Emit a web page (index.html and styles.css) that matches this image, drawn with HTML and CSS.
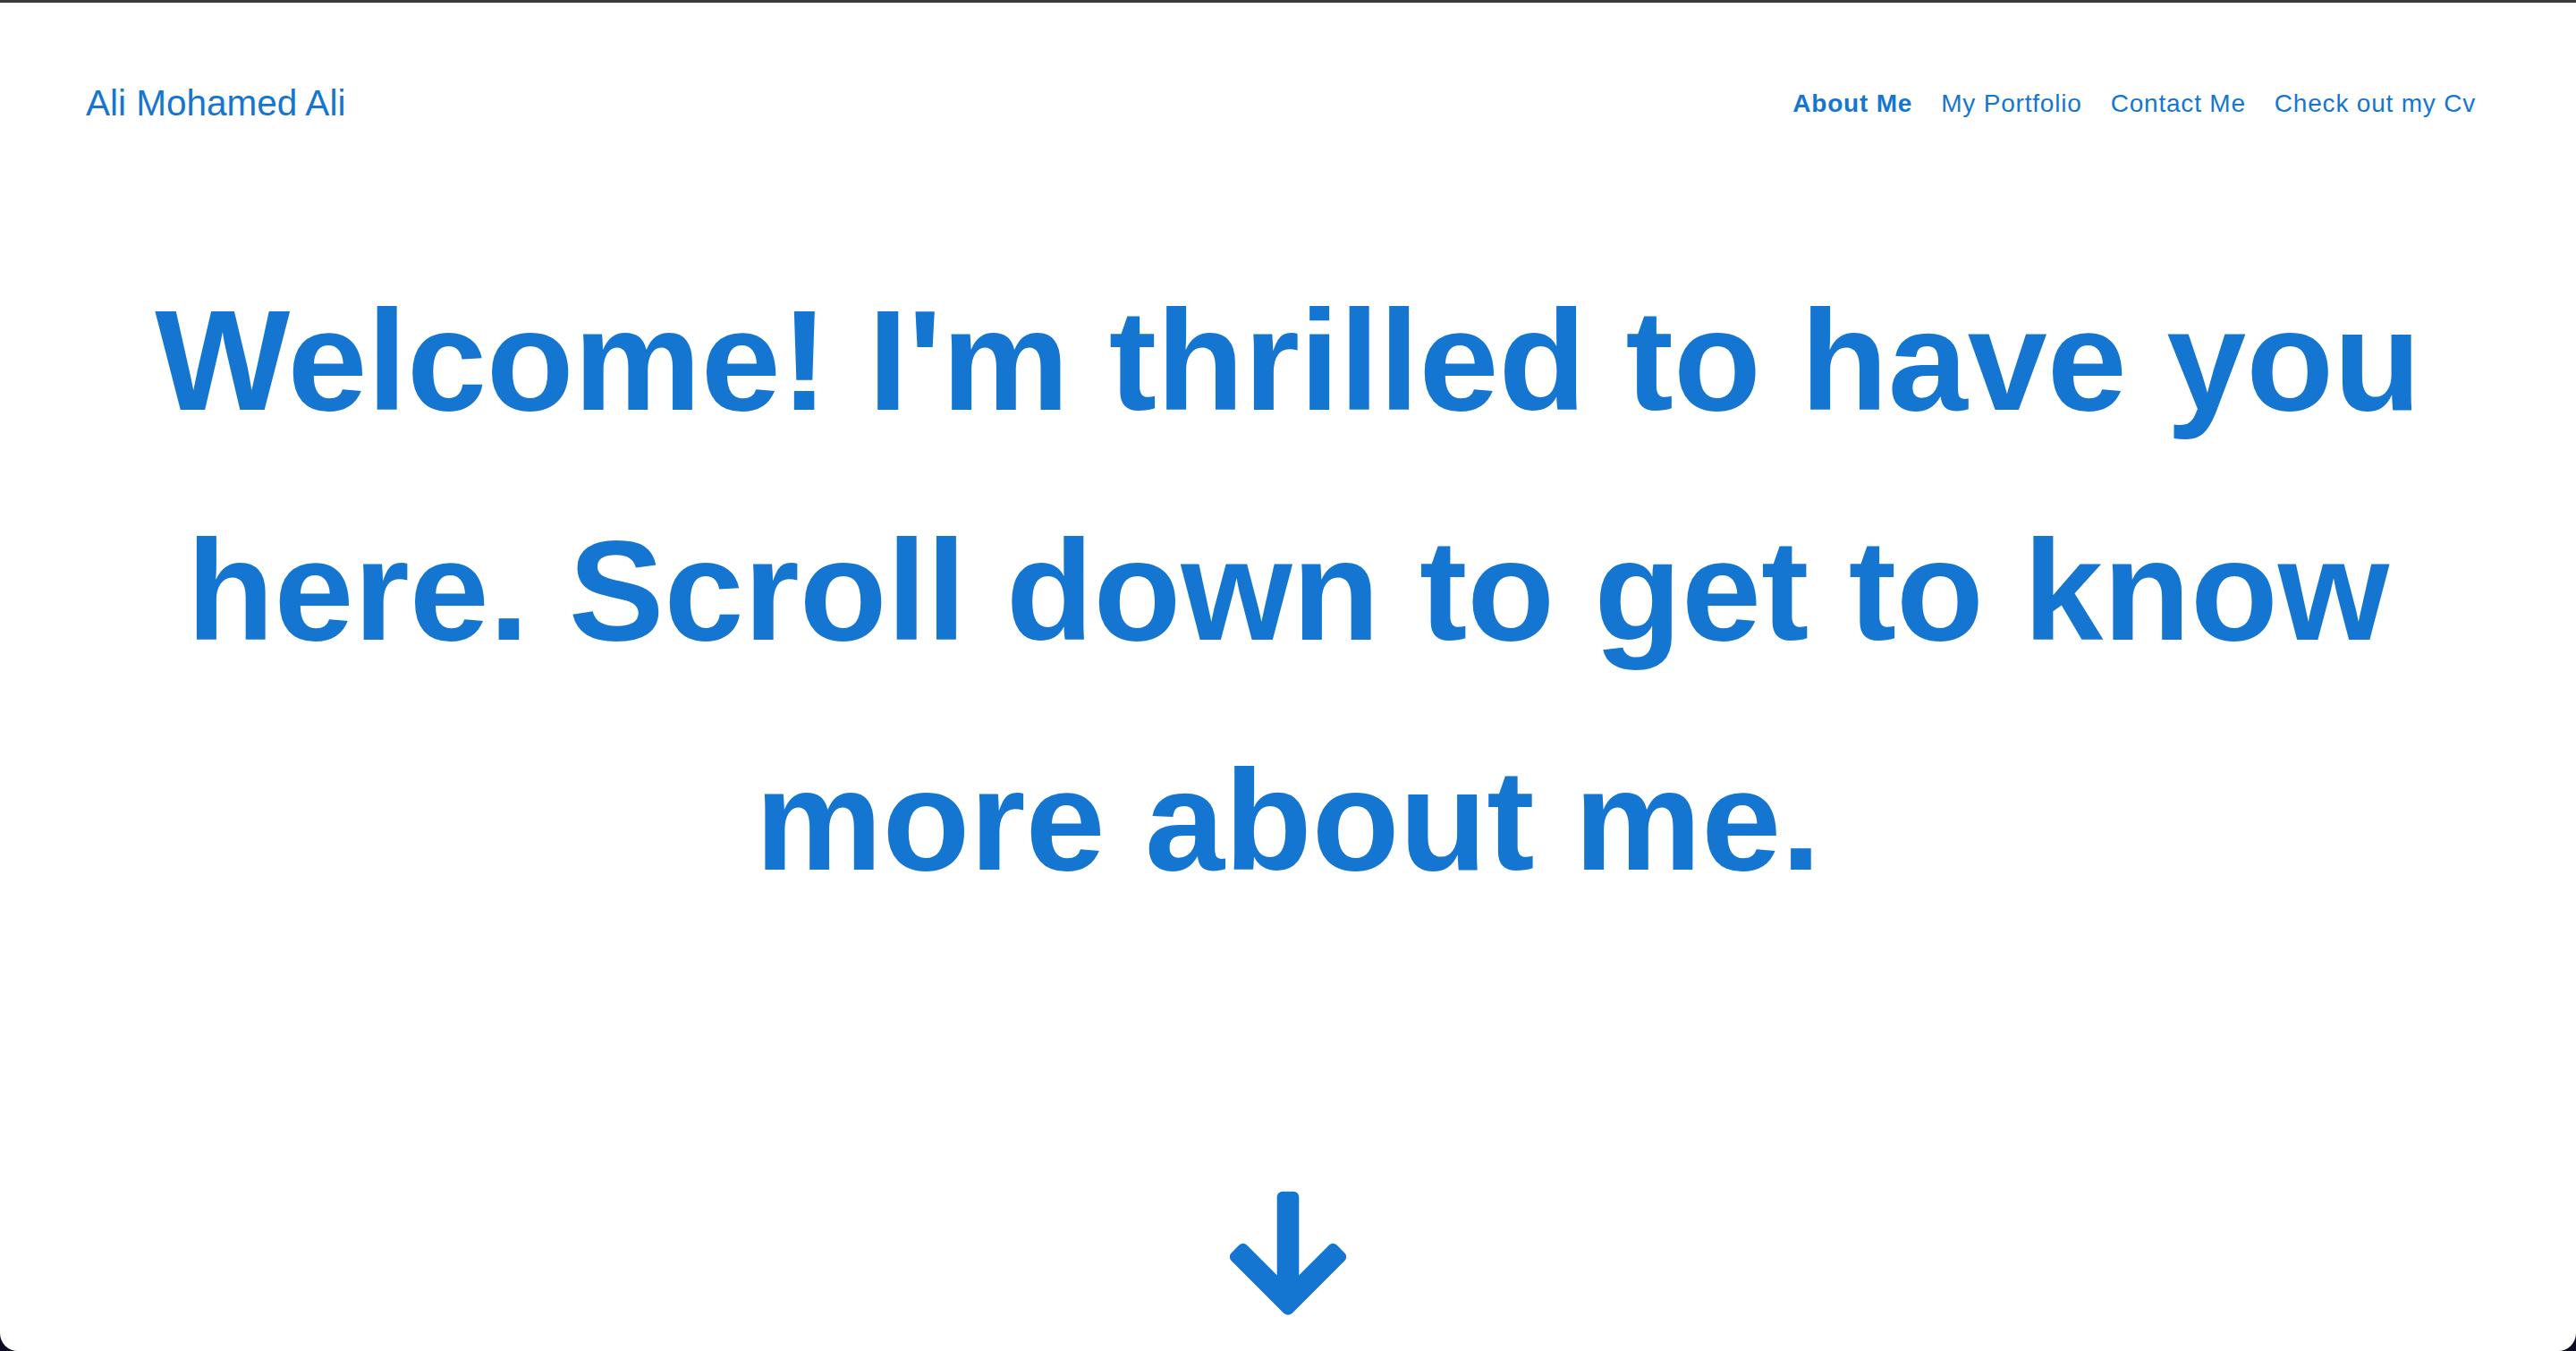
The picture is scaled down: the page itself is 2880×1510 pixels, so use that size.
FILE: index.html
```html
<!DOCTYPE html>
<html lang="en">
<head>
<meta charset="utf-8">
<title>Ali Mohamed Ali</title>
<link rel="stylesheet" href="styles.css">
</head>
<body>
<div class="window">
  <header class="header">
    <a class="logo" href="#">Ali Mohamed Ali</a>
    <nav class="nav">
      <a class="nav-link active" href="#">About Me</a>
      <a class="nav-link" href="#">My Portfolio</a>
      <a class="nav-link" href="#">Contact Me</a>
      <a class="nav-link" href="#">Check out my Cv</a>
    </nav>
  </header>
  <main class="hero">
    <h1 class="hero-title">Welcome! I'm thrilled to have you here. Scroll down to get to know more about me.</h1>
    <a class="scroll-down" href="#" aria-label="Scroll down">
      <svg class="arrow" width="140" height="143" viewBox="0 0 140 143" xmlns="http://www.w3.org/2000/svg">
        <rect x="57.7" y="1.7" width="24.6" height="125" rx="6" fill="currentColor"/>
        <rect x="0" y="-12.3" width="95" height="24.6" rx="6" fill="currentColor" transform="translate(11 66) rotate(45)"/>
        <rect x="0" y="-12.3" width="95" height="24.6" rx="6" fill="currentColor" transform="translate(129 66) rotate(135)"/>
      </svg>
    </a>
  </main>
</div>
</body>
</html>
```
FILE: styles.css
```css
html, body {
  margin: 0;
  padding: 0;
}

body {
  background: #0e0c24;
  font-family: "Liberation Sans", Arial, Helvetica, sans-serif;
  color: #1576d1;
}

.window {
  background: #ffffff;
  border-top: 3px solid #3b3b3b;
  border-radius: 0 0 20px 20px;
  min-height: 100vh;
  box-sizing: border-box;
  display: flex;
  flex-direction: column;
}

.header {
  height: 225px;
  display: flex;
  align-items: center;
  justify-content: space-between;
  padding: 0 112px 0 96px;
}

.logo {
  font-size: 40.5px;
  color: #1576d1;
  text-decoration: none;
}

.nav {
  display: flex;
  align-items: center;
  gap: 32px;
}

.nav-link {
  font-size: 28px;
  letter-spacing: 0.8px;
  color: #1576d1;
  text-decoration: none;
}

.nav-link.active {
  font-weight: bold;
}

.hero {
  flex: 1;
  display: flex;
  flex-direction: column;
  align-items: center;
}

.hero-title {
  margin: 46px 0 0;
  padding: 0 140px;
  font-size: 160px;
  line-height: 257px;
  font-weight: bold;
  text-align: center;
  color: #1576d1;
}

.scroll-down {
  margin-top: auto;
  margin-bottom: 37px;
  color: #1576d1;
  display: block;
  line-height: 0;
}

.arrow {
  display: block;
}
```
